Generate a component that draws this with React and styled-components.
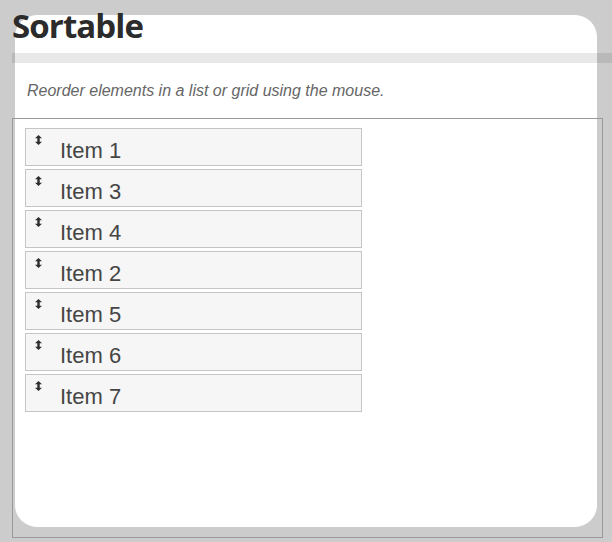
import React from "react";
import styled, { createGlobalStyle } from "styled-components";

const Global = createGlobalStyle`
  html, body { margin: 0; padding: 0; background: #cccccc; }
  body { width: 612px; height: 542px; overflow: hidden; }
`;

const Card = styled.div`
  margin: 15px 0 0 15px;
  width: 582px;
  height: 512px;
  background: #ffffff;
  border-radius: 22px;
  display: flex;
  flex-direction: column;
`;

const Title = styled.h1`
  margin: -9px 0 0 -3px;
  font-family: "Open Sans", sans-serif;
  font-weight: 700;
  font-size: 33px;
  line-height: 40px;
  color: #2b2b2b;
  letter-spacing: -0.9px;
`;

const Rule = styled.div`
  margin: 7px 0 0 -3px;
  width: 600px;
  height: 10px;
  background: rgba(0, 0, 0, 0.09);
  flex-shrink: 0;
`;

const Description = styled.p`
  margin: 18px 0 0 12px;
  font-family: "Liberation Sans", Arial, sans-serif;
  font-style: italic;
  font-size: 16px;
  line-height: 20px;
  color: #666666;
`;

const Demo = styled.div`
  margin: 17px 0 0 -3px;
  width: 591px;
  height: 420px;
  flex-shrink: 0;
  box-sizing: border-box;
  border: 1px solid #999999;
  padding: 9px 0 0 12px;
`;

const List = styled.ul`
  list-style: none;
  margin: 0;
  padding: 0;
  width: 337px;
  display: flex;
  flex-direction: column;
  gap: 3px;
`;

const Item = styled.li`
  position: relative;
  box-sizing: border-box;
  height: 38px;
  border: 1px solid #c5c5c5;
  background: #f6f6f6;
  padding: 9px 0 0 34px;
  font-family: "Liberation Sans", Arial, sans-serif;
  font-size: 22px;
  line-height: 26px;
  color: #454545;
`;

const Handle = styled.svg`
  position: absolute;
  left: 9px;
  top: 6px;
`;

const ArrowNS = () => (
  <Handle width="7" height="10" viewBox="0 0 7 10">
    <path d="M3.5 0 L7 3.2 L4.7 3.2 L4.7 6.8 L7 6.8 L3.5 10 L0 6.8 L2.3 6.8 L2.3 3.2 L0 3.2 Z" fill="#2e2e2e" />
  </Handle>
);

const items = ["Item 1", "Item 3", "Item 4", "Item 2", "Item 5", "Item 6", "Item 7"];

export default function App() {
  return (
    <>
      <Global />
      <Card>
        <Title>Sortable</Title>
        <Rule />
        <Description>Reorder elements in a list or grid using the mouse.</Description>
        <Demo>
          <List>
            {items.map((t) => (
              <Item key={t}>
                <ArrowNS />
                {t}
              </Item>
            ))}
          </List>
        </Demo>
      </Card>
    </>
  );
}
